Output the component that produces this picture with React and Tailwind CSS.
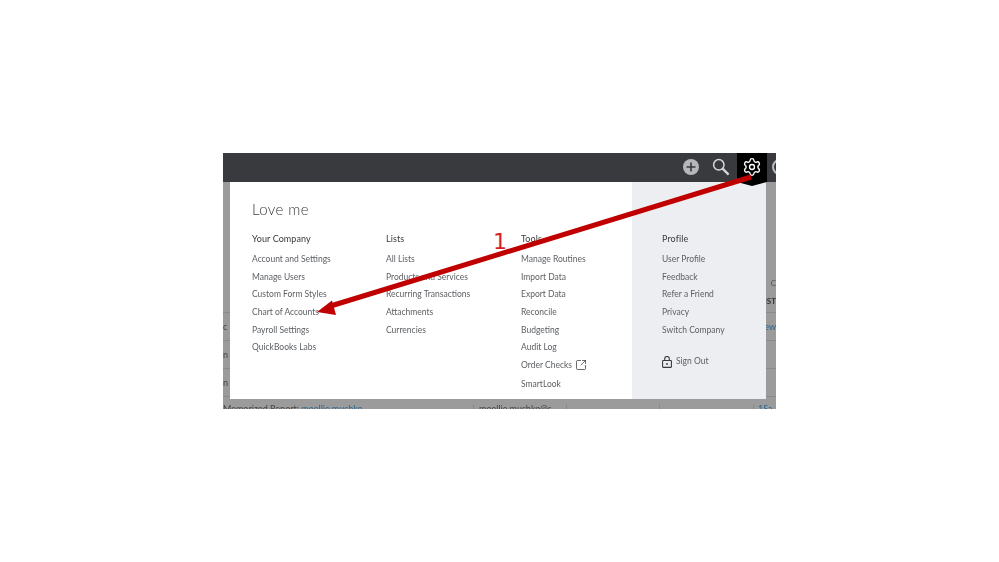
import { Settings, SquareArrowOutUpRight } from "lucide-react";

const columns = [
  {
    title: "Your Company",
    width: "w-[134px]",
    items: ["Account and Settings", "Manage Users", "Custom Form Styles", "Chart of Accounts", "Payroll Settings", "QuickBooks Labs"],
  },
  {
    title: "Lists",
    width: "w-[135px]",
    items: ["All Lists", "Products and Services", "Recurring Transactions", "Attachments", "Currencies"],
  },
  {
    title: "Tools",
    width: "w-[111px]",
    items: ["Manage Routines", "Import Data", "Export Data", "Reconcile", "Budgeting", "Audit Log"],
  },
];

const profileItems = ["User Profile", "Feedback", "Refer a Friend", "Privacy", "Switch Company"];

function MenuColumn({ title, items, width, children }) {
  return (
    <div className={`${width} shrink-0`}>
      <div className="h-[20px] text-[9px] leading-[18px] tracking-[0.1px] text-[#393a3d]">{title}</div>
      {items.map((item) => (
        <div key={item} className="h-[17.7px] text-[8.5px] leading-[18px] text-[#5c5f63]">
          {item}
        </div>
      ))}
      {children}
    </div>
  );
}

function Backdrop() {
  const rows = [
    { left: "c", right: "ew" },
    { left: "n", right: "" },
    { left: "n", right: "" },
  ];
  return (
    <>
      <div className="absolute right-0 top-[124px] text-right text-[8px] leading-[12px] text-[#555]">C</div>
      <div className="absolute right-0 top-[142px] text-[8px] font-bold leading-[12px] text-[#333]">IST</div>
      <div className="absolute inset-x-0 top-[159px] text-[9px] text-[#444]">
        {rows.map((row, i) => (
          <div key={i} className="flex h-[28px] items-center justify-between border-t border-[#8a8a8a]">
            <span>{row.left}</span>
            <span className="text-[#2a6690]">{row.right}</span>
          </div>
        ))}
        <div className="relative flex h-[13px] border-t border-[#8a8a8a] pt-[7px] leading-[10px]">
          <span className="w-[251px] border-r border-[#8a8a8a]">
            Memorized Report: <span className="text-[#2a6690]">moellie.mushko</span>
          </span>
          <span className="w-[93px] border-r border-[#8a8a8a] pl-[5px]">moellie.mushko@s</span>
          <span className="w-[93px] border-r border-[#8a8a8a]" />
          <span className="w-[94px] border-r border-[#8a8a8a]" />
          <span className="pl-[4px] text-[#2a6690]">1Sa</span>
        </div>
      </div>
    </>
  );
}

function TopBar() {
  return (
    <div className="relative z-10 flex h-[29px] items-start justify-end bg-[#393a3d]">
      <svg width="16" height="16" viewBox="0 0 16 16" className="mt-[6px]">
        <circle cx="8" cy="8" r="8" fill="#b4b7bc" />
        <path d="M8 3.5v9M3.5 8h9" stroke="#393a3d" strokeWidth="1.6" />
      </svg>
      <svg width="18" height="18" viewBox="0 0 18 18" fill="none" stroke="#d4d7dc" className="ml-[13px] mt-[5px]">
        <circle cx="6.8" cy="6.8" r="5.2" strokeWidth="1.5" />
        <path d="M10.6 10.6L16.6 16.6" strokeWidth="2.2" />
      </svg>
      <div className="ml-[7px] flex h-[33px] w-[30px] shrink-0 justify-center bg-black pt-[4px] [clip-path:polygon(0_0,100%_0,100%_29px,50%_33px,0_29px)]">
        <Settings size={20} strokeWidth={1.6} color="#ffffff" />
      </div>
      <div className="h-[29px] w-[9px] overflow-hidden pl-[5px] pt-[6px]">
        <div className="h-[16px] w-[16px] rounded-full border-2 border-[#babec5]" />
      </div>
    </div>
  );
}

function Arrow() {
  return (
    <svg className="absolute left-0 top-0" width="999" height="562" viewBox="0 0 999 562">
      <path d="M751 177L329 306.5" stroke="#c00000" strokeWidth="5" fill="none" />
      <path d="M317 312L332 300.5L336 315Z" fill="#c00000" />
    </svg>
  );
}

export default function App() {
  return (
    <div className="relative h-[562px] w-[999px] overflow-hidden bg-white pl-[223px] pt-[153px] font-['Lato','Liberation_Sans',sans-serif]">
      <div className="relative h-[256px] w-[553px] overflow-hidden bg-[#9b9b9b] blur-[0.3px]">
        <Backdrop />
        <TopBar />
        <div className="relative ml-[7px] flex h-[217px] w-[536px] bg-white">
          <div className="w-[402px] pl-[22px] pt-[17px]">
            <div className="h-[31px] text-[15px] font-light leading-[20px] tracking-[0.4px] text-[#393a3d]">Love me</div>
            <div className="flex">
              {columns.map((col) => (
                <MenuColumn key={col.title} title={col.title} items={col.items} width={col.width}>
                  {col.title === "Tools" && (
                    <>
                      <div className="flex h-[18px] items-center gap-[3px] text-[8.5px] text-[#5c5f63]">
                        Order Checks
                        <SquareArrowOutUpRight size={12} strokeWidth={1.5} color="#393a3d" />
                      </div>
                      <div className="mt-[1px] h-[18px] text-[8.5px] leading-[18px] text-[#5c5f63]">SmartLook</div>
                    </>
                  )}
                </MenuColumn>
              ))}
            </div>
          </div>
          <div className="w-[134px] bg-[#eceef1] pl-[30px] pt-[48px]">
            <MenuColumn title="Profile" items={profileItems} width="w-[100px]" />
            <div className="mt-[17px] flex items-center gap-[4px] text-[8.5px] text-[#5c5f63]">
              <svg width="10" height="12" viewBox="0 0 10 12" fill="none" stroke="#393a3d" strokeWidth="1.1">
                <rect x="0.6" y="4.5" width="8.8" height="6.9" rx="0.6" />
                <path d="M2.7 4.5V2.6a2.3 2.1 0 0 1 4.6 0V4.5" />
                <circle cx="5" cy="8" r="0.9" fill="#393a3d" stroke="none" />
              </svg>
              Sign Out
            </div>
          </div>
        </div>
      </div>
      <Arrow />
      <div className="absolute left-[493px] top-[229px] font-['DejaVu_Sans',sans-serif] text-[22px] leading-[26px] text-[#d81e1e]">1</div>
    </div>
  );
}
